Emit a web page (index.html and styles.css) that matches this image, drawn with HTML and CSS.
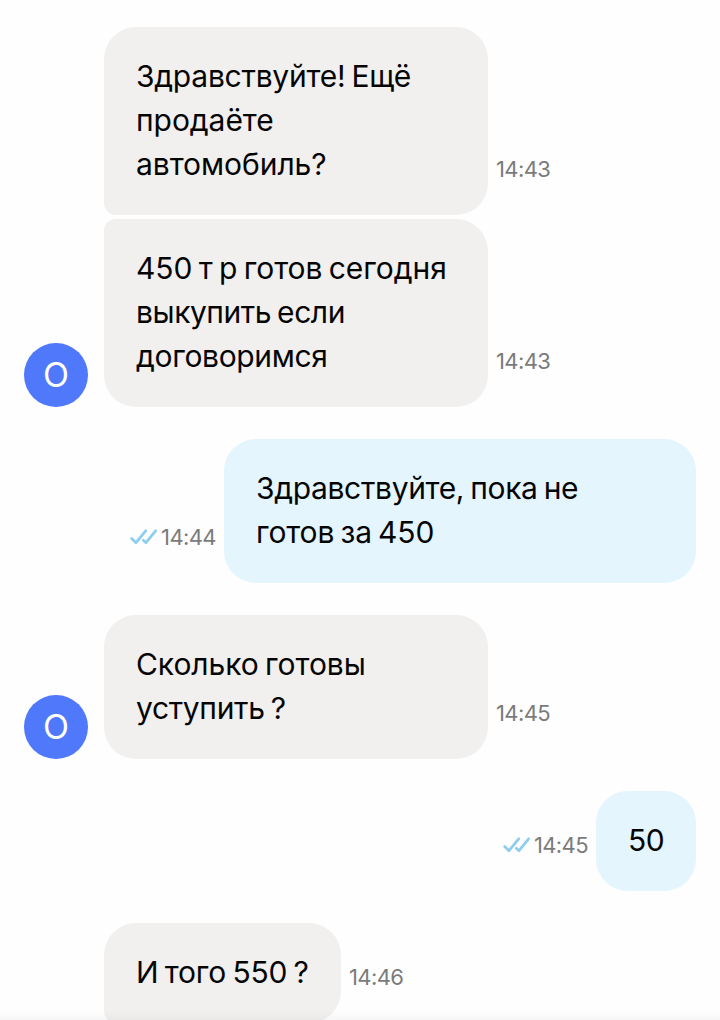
FILE: index.html
```
<!DOCTYPE html>
<html lang="ru">
<head>
    <meta charset="UTF-8">
    <title>Чат</title>
    <link rel="stylesheet" href="styles.css">
</head>
<body>
    <div class="chat">
        <div class="message incoming first">
            <div class="bubble wide joined-bottom">
                <p class="line snug">Здравствуйте! Ещё</p>
                <p class="line">продаёте</p>
                <p class="line">автомобиль?</p>
            </div>
            <span class="time">14:43</span>
        </div>
        <div class="message incoming joined">
            <div class="avatar">О</div>
            <div class="bubble wide joined-top">
                <p class="line">450 т р готов сегодня</p>
                <p class="line tighter">выкупить если</p>
                <p class="line tight">договоримся</p>
            </div>
            <span class="time">14:43</span>
        </div>
        <div class="message outgoing">
            <svg class="ticks" viewBox="0 0 27 16"><path d="M1.7 9.5L6 13.7L15.7 1.8M13.3 11.3L16 13.7L25.6 1.8"/></svg>
            <span class="time">14:44</span>
            <div class="bubble long">
                <p class="line tight">Здравствуйте, пока не</p>
                <p class="line slight">готов за 450</p>
            </div>
        </div>
        <div class="message incoming">
            <div class="avatar">О</div>
            <div class="bubble wide">
                <p class="line">Сколько готовы</p>
                <p class="line tight">уступить ?</p>
            </div>
            <span class="time">14:45</span>
        </div>
        <div class="message outgoing">
            <svg class="ticks" viewBox="0 0 27 16"><path d="M1.7 9.5L6 13.7L15.7 1.8M13.3 11.3L16 13.7L25.6 1.8"/></svg>
            <span class="time">14:45</span>
            <div class="bubble number">
                <p class="line tighter">50</p>
            </div>
        </div>
        <div class="message incoming">
            <div class="bubble short joined-bottom">
                <p class="line slight">И того 550 ?</p>
            </div>
            <span class="time">14:46</span>
        </div>
    </div>
    <div class="bottom-shade"></div>
</body>
</html>
```
FILE: styles.css
```
body {
    position: relative;
    margin: 0;
    height: 1020px;
    overflow: hidden;
    background: #fefefe;
    font-family: Inter, "Open Sans", sans-serif;
    color: #050505;
}
.chat {
    display: flex;
    flex-direction: column;
    padding: 26.5px 24px 0;
}
.message {
    display: flex;
    align-items: flex-end;
    margin-top: 32px;
}
.message.first {
    margin-top: 0;
}
.message.joined {
    margin-top: 4px;
}
.incoming {
    padding-left: 80px;
}
.outgoing {
    justify-content: flex-end;
}
.avatar {
    width: 64px;
    height: 64px;
    margin-left: -80px;
    margin-right: 16px;
    border-radius: 50%;
    background: #5078fa;
    color: #fff;
    font-size: 34px;
    line-height: 64px;
    text-align: center;
}
.bubble {
    box-sizing: border-box;
    padding: 27.5px 32px 28.5px;
    border-radius: 32px;
    background: #f1f0ee;
}
.outgoing .bubble {
    background: #e4f5fe;
}
.wide {
    width: 384px;
}
.long {
    width: 472px;
}
.number {
    width: 100px;
}
.short {
    width: 237px;
}
.joined-bottom {
    border-bottom-left-radius: 12px;
}
.joined-top {
    border-top-left-radius: 12px;
}
.line {
    margin: 0;
    font-size: 30px;
    line-height: 44px;
    letter-spacing: -0.06px;
    word-spacing: -2px;
    white-space: nowrap;
}
.slight {
    letter-spacing: -0.16px;
}
.snug {
    letter-spacing: -0.25px;
}
.tight {
    letter-spacing: -0.34px;
}
.tighter {
    letter-spacing: -0.45px;
}
.time {
    padding: 0 8px 30.5px;
    color: #7b7b7b;
    font-size: 22px;
    line-height: 30px;
    letter-spacing: -0.6px;
}
.outgoing .time {
    padding-left: 4px;
}
.ticks {
    width: 27px;
    height: 16px;
    margin-bottom: 37.5px;
    fill: none;
    stroke: #8ccdf0;
    stroke-width: 2.7;
    stroke-linecap: round;
    stroke-linejoin: round;
}
.bottom-shade {
    position: absolute;
    left: 0;
    right: 0;
    bottom: 0;
    height: 10px;
    background: linear-gradient(rgba(0,0,0,0), rgba(0,0,0,0.03));
}
```
